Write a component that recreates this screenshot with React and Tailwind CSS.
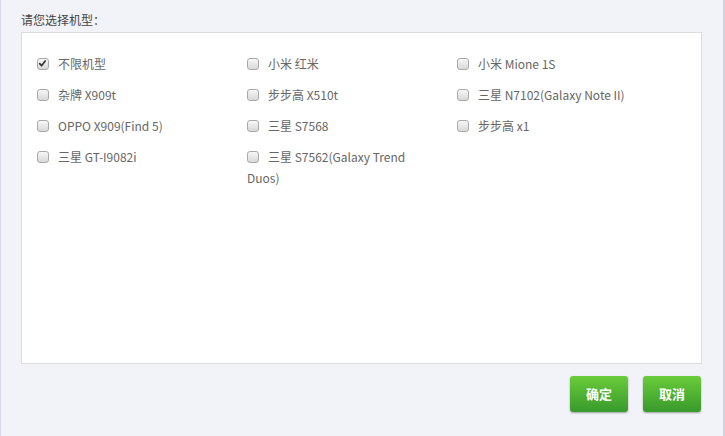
import { useState } from 'react'

const models = [
  '不限机型',
  '小米 红米',
  '小米 Mione 1S',
  '杂牌 X909t',
  '步步高 X510t',
  '三星 N7102(Galaxy Note II)',
  'OPPO X909(Find 5)',
  '三星 S7568',
  '步步高 x1',
  '三星 GT-I9082i',
  '三星 S7562(Galaxy Trend Duos)',
]

const Box = ({ checked }) => (
  <span className="relative mr-[9px] inline-block h-[12px] w-[12px] rounded-[3px] border border-[#a9a9a9] bg-gradient-to-b from-[#f7f7f7] to-[#d8d8d8] align-[-1px]">
    {checked && (
      <svg viewBox="0 0 12 12" className="absolute left-[0px] top-[0px] h-[10px] w-[10px]">
        <path d="M2 5.6 L4.3 8 L8.6 2.4" fill="none" stroke="#333" strokeWidth="2" strokeLinecap="round" strokeLinejoin="round" />
      </svg>
    )}
  </span>
)

export default function App() {
  const [picked, setPicked] = useState(['不限机型'])

  const toggle = (name) =>
    setPicked((p) => (p.includes(name) ? p.filter((n) => n !== name) : [...p, name]))

  return (
    <div
      className="h-[436px] w-[725px] border-l border-r-2 border-l-[#dadbe6] border-r-[#d2d3df] bg-[#f2f3f8] text-[12px]"
      style={{ fontFamily: '"Microsoft YaHei", "Noto Sans CJK SC", sans-serif' }}
    >
      <div className="pl-[20px] pt-[10px] leading-[20px] text-[#444]">请您选择机型：</div>
      <div className="ml-[20px] mt-[2px] h-[332px] w-[681px] border border-[#dcdcdc] bg-white pl-[15px] pt-[20px]">
        <div className="grid grid-cols-[210px_210px_210px]">
          {models.map((m) => (
            <label
              key={m}
              className="block w-[190px] cursor-pointer pb-[10px] leading-[21px] text-[#666]"
              onClick={() => toggle(m)}
            >
              <Box checked={picked.includes(m)} />
              {m}
            </label>
          ))}
        </div>
      </div>
      <div className="mr-[22px] mt-[12px] flex justify-end gap-[15px]">
        <button className="h-[36px] w-[58px] rounded-[3px] bg-gradient-to-b from-[#6acc3a] to-[#379a2b] text-[13px] font-bold text-white shadow-[0_1px_2px_rgba(0,0,0,0.35)]">
          确定
        </button>
        <button className="h-[36px] w-[58px] rounded-[3px] bg-gradient-to-b from-[#6acc3a] to-[#379a2b] text-[13px] font-bold text-white shadow-[0_1px_2px_rgba(0,0,0,0.35)]">
          取消
        </button>
      </div>
    </div>
  )
}
